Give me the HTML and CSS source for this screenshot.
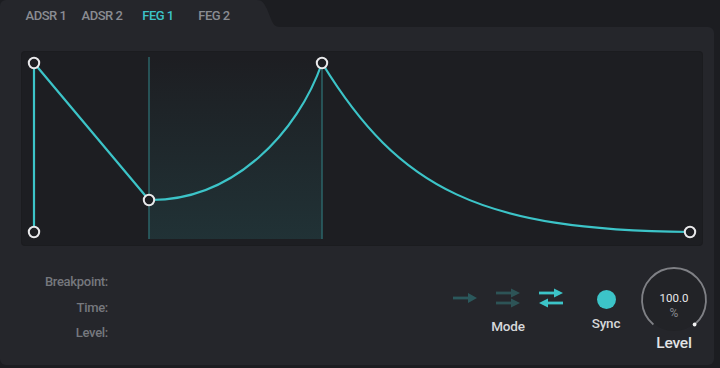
FILE: index.html
```html
<!DOCTYPE html>
<html>
<head>
<meta charset="utf-8">
<link rel="stylesheet" href="styles.css">
</head>
<body>
<div class="app">
  <div class="tabbar">
    <div class="tabs">
      <div class="tab">ADSR 1</div>
      <div class="tab">ADSR 2</div>
      <div class="tab active">FEG 1</div>
      <div class="tab">FEG 2</div>
    </div>
    <svg class="slope" width="24" height="27" viewBox="0 0 24 27">
      <path d="M0 0 H1 C6 0 8 3 11 9 L15 19 C17 24 19 27 24 27 H0 Z" fill="#25262b"/>
    </svg>
  </div>
  <div class="main">
    <div class="graph">
      <svg width="680" height="193" viewBox="0 0 680 193">
        <defs>
          <linearGradient id="shade" x1="0" y1="0" x2="0" y2="1">
            <stop offset="0" stop-color="#3cc4c8" stop-opacity="0"/>
            <stop offset="1" stop-color="#3cc4c8" stop-opacity="0.12"/>
          </linearGradient>
        </defs>
        <rect x="127" y="5" width="173" height="182" fill="url(#shade)"/>
        <line x1="127" y1="5" x2="127" y2="187" stroke="#2b6468" stroke-width="1.5"/>
        <line x1="300" y1="5" x2="300" y2="187" stroke="#2b6468" stroke-width="1.5"/>
        <g fill="none" stroke="#3cc4c8" stroke-width="2.2" stroke-linecap="round">
          <path d="M12 180 V11"/>
          <path d="M12 11 L127 148"/>
          <path d="M127 148 C212 149 276 80 300 11"/>
          <path d="M300 11 C378 138 458 178 668 180"/>
        </g>
        <g fill="#1d1e22" stroke="#e9e9eb" stroke-width="2">
          <circle cx="12" cy="11" r="5.2"/>
          <circle cx="12" cy="180" r="5.2"/>
          <circle cx="127" cy="148" r="5.2"/>
          <circle cx="300" cy="11" r="5.2"/>
          <circle cx="668" cy="180" r="5.2"/>
        </g>
      </svg>
    </div>
    <div class="bottom">
      <div class="labels">
        <div>Breakpoint:</div>
        <div>Time:</div>
        <div>Level:</div>
      </div>
      <div class="mode">
        <div class="icons">
          <svg width="24" height="20" viewBox="0 0 24 20">
            <g fill="#2b585c" stroke="#2b585c">
              <line x1="0" y1="10" x2="16" y2="10" stroke-width="2.8"/>
              <polygon points="15,5 24,10 15,15" stroke="none"/>
            </g>
          </svg>
          <svg width="24" height="20" viewBox="0 0 24 20">
            <g fill="#2d5356" stroke="#2d5356">
              <line x1="0" y1="5" x2="16" y2="5" stroke-width="2.8"/>
              <polygon points="15,0.5 24,5 15,9.5" stroke="none"/>
              <line x1="0" y1="15" x2="16" y2="15" stroke-width="2.8"/>
              <polygon points="15,10.5 24,15 15,19.5" stroke="none"/>
            </g>
          </svg>
          <svg width="24" height="20" viewBox="0 0 24 20">
            <g fill="#3cc4c8" stroke="#3cc4c8">
              <line x1="0" y1="5" x2="16" y2="5" stroke-width="2.8"/>
              <polygon points="15,0.5 24,5 15,9.5" stroke="none"/>
              <line x1="8" y1="15" x2="24" y2="15" stroke-width="2.8"/>
              <polygon points="9,10.5 0,15 9,19.5" stroke="none"/>
            </g>
          </svg>
        </div>
        <div class="ctl-label">Mode</div>
      </div>
      <div class="sync">
        <div class="dot"></div>
        <div class="ctl-label">Sync</div>
      </div>
      <div class="knob">
        <svg width="70" height="70" viewBox="0 0 70 70">
          <circle cx="35" cy="35" r="31" fill="#222327"/>
          <path d="M14.4 59.5 A32 32 0 1 1 55.6 59.5" fill="none" stroke="#7f8085" stroke-width="1.8"/>
          <circle cx="55.6" cy="59.5" r="1.9" fill="#f2f2f2"/>
          <text x="35" y="37" class="kv">100.0</text>
          <text x="35" y="52" class="ku">%</text>
        </svg>
        <div class="knob-label">Level</div>
      </div>
    </div>
  </div>
</div>
</body>
</html>
```
FILE: styles.css
```css
* { box-sizing: border-box; }
html, body {
  margin: 0;
  padding: 0;
  background: #1c1d21;
  width: 720px;
  height: 368px;
  overflow: hidden;
  font-family: Roboto, "Liberation Sans", sans-serif;
}
.app {
  width: 714px;
}
.tabbar {
  display: flex;
  height: 27px;
}
.tabs {
  display: flex;
  width: 256px;
  background: #25262b;
  border-top-left-radius: 6px;
  padding-left: 18px;
}
.slope {
  display: block;
}
.tab {
  width: 56px;
  text-align: center;
  font-size: 13px;
  letter-spacing: -0.5px;
  line-height: 14px;
  padding-top: 9px;
  color: #8a8c92;
  font-weight: 500;
}
.tab.active {
  color: #3cc4c8;
}
.main {
  background: #25262b;
  border-radius: 0 6px 6px 6px;
  height: 338px;
  padding: 25px 5px 0 22px;
}
.graph {
  height: 193px;
  margin-right: 7px;
  background: #1d1e22;
  border-radius: 3px;
  box-shadow: 0 0 0 1px #1b1c1f;
}
.graph svg {
  display: block;
}
.bottom {
  display: flex;
  align-items: flex-start;
}
.labels {
  width: 86px;
  text-align: right;
  padding-top: 24px;
  line-height: 25.5px;
  font-size: 13px;
  letter-spacing: -0.3px;
  color: #76787e;
  font-weight: 500;
}
.mode {
  margin-left: auto;
  padding-top: 43px;
  display: flex;
  flex-direction: column;
  align-items: center;
}
.icons {
  display: flex;
  gap: 19px;
}
.icons svg {
  display: block;
}
.ctl-label {
  font-size: 13.5px;
  font-weight: 500;
  color: #d6d7d9;
  line-height: 16px;
  letter-spacing: -0.2px;
}
.mode .ctl-label {
  margin-top: 10px;
}
.sync {
  width: 40px;
  margin-left: 23px;
  padding-top: 45px;
  display: flex;
  flex-direction: column;
  align-items: center;
}
.dot {
  width: 19px;
  height: 19px;
  border-radius: 50%;
  background: #3cc4c8;
}
.sync .ctl-label {
  margin-top: 6px;
}
.knob {
  width: 70px;
  margin-left: 13px;
  padding-top: 20px;
  display: flex;
  flex-direction: column;
  align-items: center;
}
.knob svg {
  display: block;
}
.kv {
  font-size: 11.5px;
  fill: #e8e8ea;
  text-anchor: middle;
  font-family: Roboto, sans-serif;
}
.ku {
  font-size: 12px;
  fill: #85878c;
  text-anchor: middle;
  font-family: Roboto, sans-serif;
}
.knob-label {
  margin-top: -1px;
  font-size: 15.5px;
  font-weight: 500;
  color: #e2e3e5;
  line-height: 18px;
  letter-spacing: -0.2px;
}
```
